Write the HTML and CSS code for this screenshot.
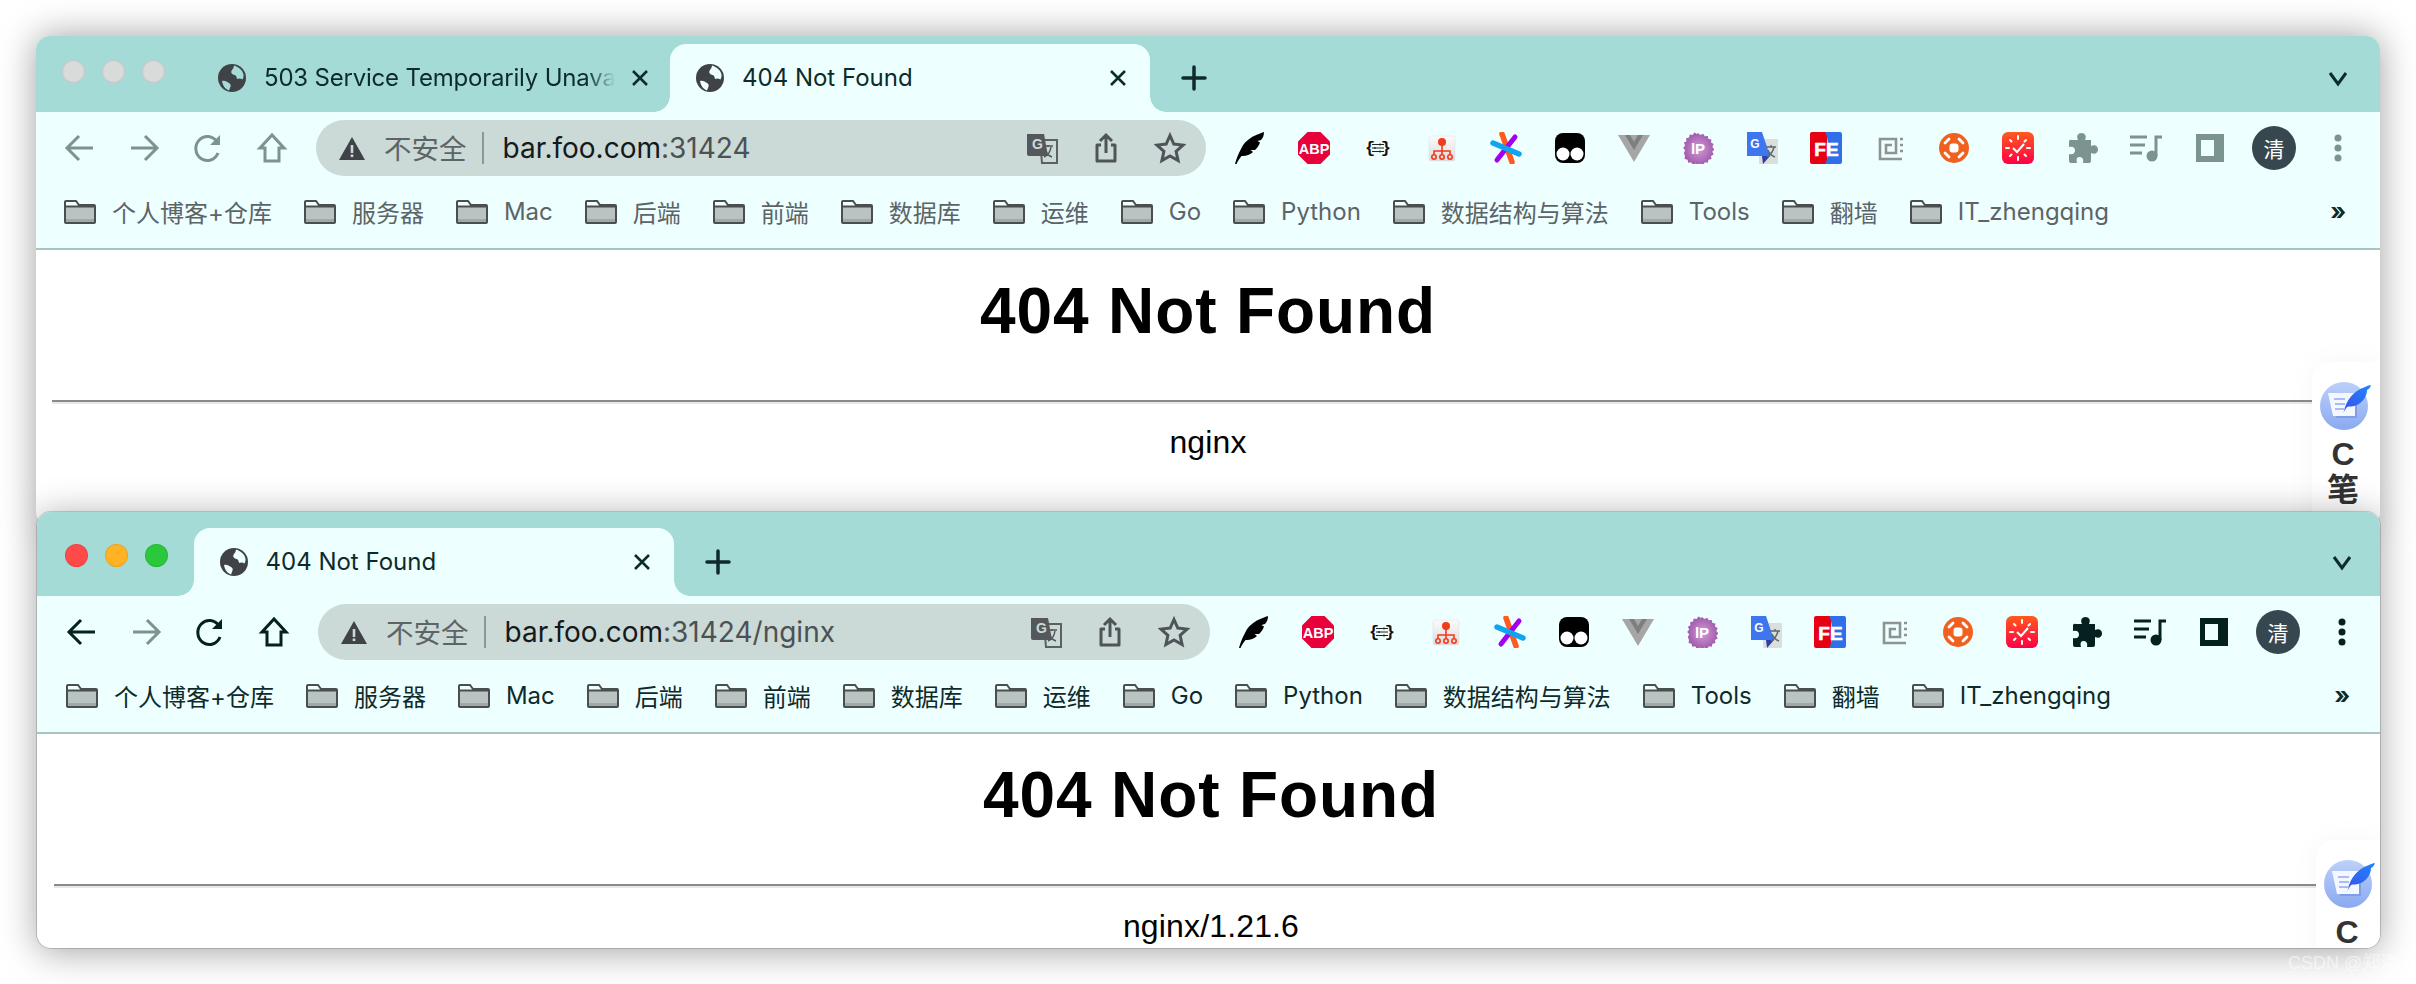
FILE: index.html
```html
<!DOCTYPE html>
<html lang="zh">
<head>
<meta charset="utf-8">
<title>404 Not Found</title>
<link rel="stylesheet" href="styles.css">
</head>
<body>
<svg class="defs" width="0" height="0" aria-hidden="true">
  <defs>
    <linearGradient id="clockG" x1="0" y1="0" x2="0" y2="1"><stop offset="0" stop-color="#ff5a1e"/><stop offset="1" stop-color="#ff0046"/></linearGradient>
    <linearGradient id="orgG" x1="0" y1="0" x2="0" y2="1"><stop offset="0" stop-color="#fbfbfb"/><stop offset="1" stop-color="#dcdcdc"/></linearGradient>
    <linearGradient id="noteG" x1="0" y1="0" x2="0" y2="1"><stop offset="0" stop-color="#bcd0f9"/><stop offset="1" stop-color="#8aa9f0"/></linearGradient>
    <linearGradient id="quillG" x1="1" y1="0" x2="0" y2="1"><stop offset="0" stop-color="#1f86ff"/><stop offset="1" stop-color="#3a4fe8"/></linearGradient>
    <radialGradient id="ipG"><stop offset="0" stop-color="#d39bd8"/><stop offset="1" stop-color="#a05aab"/></radialGradient>
    <symbol id="i-globe" viewBox="0 0 28 28"><circle cx="14" cy="14" r="14" fill="#3f4347"/><path d="M16 1.500c2.500 1 6 2.500 8 5.500 2 3 2 6 .5 8.500-1.500-1-3.500-1.500-5-.5-1.500-1.500-.5-3.500-3-4-2-.5-4-2-3-4 .5-1.500 2-2 2.500-5.500zM4 17c2.500-1 5 .5 7 2 1.500 1 2 2 1.500 3.500l-1.500 4c-3-1-6-4-7-9.500z" fill="var(--tab-cut)"/></symbol>
    <symbol id="i-close" viewBox="0 0 20 20"><path d="M3 3l14 14M17 3L3 17" fill="none" stroke="#0c2b2a" stroke-width="2.600"/></symbol>
    <symbol id="i-plus" viewBox="0 0 32 32"><path d="M16 5v22M5 16h22" fill="none" stroke="#0c2b2a" stroke-width="3.500" stroke-linecap="round"/></symbol>
    <symbol id="i-chev" viewBox="0 0 24 24"><path d="M4 7l8 11 8-11" fill="none" stroke="#0c2b2a" stroke-width="3"/></symbol>
    <symbol id="i-back" viewBox="0 0 32 32"><path d="M29 16H4M15 4L3 16l12 12" fill="none" stroke="currentColor" stroke-width="3"/></symbol>
    <symbol id="i-fwd" viewBox="0 0 32 32"><path d="M3 16h25M17 4l12 12-12 12" fill="none" stroke="currentColor" stroke-width="3"/></symbol>
    <symbol id="i-reload" viewBox="0 0 32 32"><path d="M26 21a11.500 12 0 1 1-1-11" fill="none" stroke="currentColor" stroke-width="3"/><path d="M28 3v10H18z" fill="currentColor"/></symbol>
    <symbol id="i-home" viewBox="0 0 32 32"><path d="M4 16L16 3l12 13h-5v13H9V16z" fill="none" stroke="currentColor" stroke-width="3"/></symbol>
    <symbol id="i-warn" viewBox="0 0 28 28"><path d="M14 3l13 23H1z" fill="#3f4347"/><rect x="12.700" y="11" width="2.600" height="8" fill="#cbd9d7"/><rect x="12.700" y="20.500" width="2.600" height="2.600" fill="#cbd9d7"/></symbol>
    <symbol id="i-gt" viewBox="0 0 32 32"><path d="M14 8h17v23H16z" fill="#cbd9d7" stroke="#5b6063" stroke-width="2"/><path d="M1 2h17l4 22H3a2 2 0 0 1-2-2z" fill="#54585c"/><text x="6" y="17" class="gt-g">G</text><path d="M17 14h10M22 13v2M25 15c-1 6-4 9-7 10M19 17c1 4 4 7 7 8" fill="none" stroke="#54585c" stroke-width="1.500"/></symbol>
    <symbol id="i-share" viewBox="0 0 32 32"><path d="M11 13H7v16h18V13h-4" fill="none" stroke="#4f5458" stroke-width="3" stroke-linejoin="round"/><path d="M16 21V3M10 9l6-6 6 6" fill="none" stroke="#4f5458" stroke-width="3"/></symbol>
    <symbol id="i-star" viewBox="0 0 32 32"><path d="M16 3.500l3.800 8.600 9.300 1-7 6.300 2 9.200-8.100-4.700-8.100 4.700 2-9.200-7-6.300 9.300-1z" fill="none" stroke="#4f5458" stroke-width="3" stroke-linejoin="miter"/></symbol>
    <symbol id="i-feather" viewBox="0 0 32 32"><path d="M1 32C2 28 4 22 7 17 10 10 16 6 20 4 24 2 27 1 30 0 30 3 29 6 27 8L23.500 9 26 10.500C25 14 23 16 21 18L16.500 18 19 20C16 23 11 24.500 7.500 24 5.500 26.500 3.500 29.500 2.500 32Z" fill="#000"/></symbol>
    <symbol id="i-abp" viewBox="0 0 32 32"><path d="M9.500 0h13L32 9.500v13L22.500 32h-13L0 22.500v-13z" fill="#e8003a"/><text x="16" y="21.500" class="abp-t">ABP</text></symbol>
    <symbol id="i-json" viewBox="0 0 32 32"><text x="3" y="21" class="json-t">{</text><text x="29" y="21" class="json-t json-e">}</text><path d="M10 12.500h12M10 16h12M10 19.500h12" stroke="#222" stroke-width="1.100"/><path d="M18 11.500v2M13 15v2M18 18.500v2" stroke="#222" stroke-width="1.300"/></symbol>
    <symbol id="i-org" viewBox="0 0 32 32"><rect x="3" y="4" width="26" height="25" rx="2" fill="url(#orgG)" stroke="#ddd" stroke-width=".5"/><circle cx="16" cy="10" r="4" fill="#f23a1c"/><path d="M16 13v5M8 23v-4h16v4M16 18v5" fill="none" stroke="#f23a1c" stroke-width="1.600"/><g fill="none" stroke="#f23a1c" stroke-width="1.600"><circle cx="8" cy="25" r="2.200"/><circle cx="16" cy="25" r="2.200"/><circle cx="24" cy="25" r="2.200"/></g></symbol>
    <symbol id="i-spark" viewBox="0 0 32 32"><path d="M12 2l10 28" stroke="#ff5a1f" stroke-width="5.500" stroke-linecap="round"/><path d="M25 5L7 28" stroke="#a200f5" stroke-width="5" stroke-linecap="round"/><path d="M3 11l26 11" stroke="#0ea5ee" stroke-width="5.500" stroke-linecap="round"/></symbol>
    <symbol id="i-tamper" viewBox="0 0 32 32"><rect x="1" y="1" width="30" height="30" rx="8" fill="#000"/><circle cx="9" cy="22" r="6.500" fill="#fff"/><circle cx="23" cy="22" r="6.500" fill="#fff"/></symbol>
    <symbol id="i-vue" viewBox="0 0 32 32"><path d="M0 3h32L16 30z" fill="#a6a6a6"/><path d="M7 3h18l-9 15z" fill="#7e7e7e"/><path d="M12 3h8l-4 7z" fill="#a6a6a6"/></symbol>
    <symbol id="i-ip" viewBox="0 0 32 32"><path d="M16 1l2.400 2 2.800-1.300 1.600 2.600 3-.4.600 3 3 .6-.4 3 2.600 1.600-1.300 2.800 2 2.400-2 2.400 1.300 2.800-2.600 1.600.4 3-3 .6-.6 3-3-.4-1.600 2.600-2.800-1.300-2.400 2-2.400-2-2.800 1.300-1.600-2.600-3 .4-.6-3-3-.6.4-3L1.900 21l1.300-2.800-2-2.200 2-2.400L1.900 10.800l2.600-1.600-.4-3 3-.6.6-3 3 .4 1.600-2.600L15 2z" fill="url(#ipG)"/><text x="16" y="22" class="ip-t">lP</text></symbol>
    <symbol id="i-gtc" viewBox="0 0 32 32"><rect x="13" y="7" width="19" height="25" rx="1" fill="#dcdedc"/><path d="M1 0h15l8 24H1z" fill="#3d76ee"/><path d="M16 24h8l-7 8z" fill="#2a3fa8"/><text x="9" y="16" class="gtc-g">G</text><path d="M20 15h10M25 13v2M28 15c-1 5-4 8-7 10M22 18c1 3 4 6 7 7" fill="none" stroke="#5a6a72" stroke-width="1.500"/></symbol>
    <symbol id="i-fe" viewBox="0 0 32 32"><path d="M2 0h15v32H2a2 2 0 0 1-2-2V2a2 2 0 0 1 2-2z" fill="#e60012"/><path d="M15 0h15a2 2 0 0 1 2 2v28a2 2 0 0 1-2 2H15c4-5 4-27 0-32z" fill="#2f6fe8"/><text x="16.500" y="24" class="fe-t">FE</text></symbol>
    <symbol id="i-spiral" viewBox="0 0 32 32"><path d="M28 27H6V7h16v14H12v-8h6" fill="none" stroke="#8f9391" stroke-width="2.600"/><path d="M26 7h3M26 13h3M26 19h3" stroke="#8f9391" stroke-width="2.600"/></symbol>
    <symbol id="i-orange" viewBox="0 0 32 32"><circle cx="16" cy="16" r="15" fill="#f0611f"/><rect x="11.500" y="11.500" width="9" height="9" rx="3" fill="#fff"/><path d="M7 11l4-4M21 7l4 4M7 21l4 4M21 25l4-4" stroke="#fff" stroke-width="2.800" stroke-linecap="round" fill="none"/></symbol>
    <symbol id="i-clock" viewBox="0 0 32 32"><rect width="32" height="32" rx="6" fill="url(#clockG)"/><path d="M16 4v3M16 25v3M4 16h3M25 16h3M8 8l1.500 1.500M24 8l-1.500 1.500M8 24l1.500-1.500M24 24l-1.500-1.500" stroke="#fff" stroke-width="2" stroke-linecap="round"/><path d="M11 16l4 4 7-8" fill="none" stroke="#fff" stroke-width="2"/></symbol>
    <symbol id="i-puzzle" viewBox="0 0 32 32"><path d="M6 8h6c-2-4 0-7 3.500-7S21 4 19 8h6v6c4-2 7 0 7 3.500S29 23 25 21v8a2 2 0 0 1-2 2h-6c1-4-1-6-3.500-6S10 27 11 31H5a2 2 0 0 1-2-2v-7c4 1 6-1 6-3.500S7 14 3 15V10a2 2 0 0 1 3-2z" fill="currentColor"/></symbol>
    <symbol id="i-music" viewBox="0 0 32 32"><path d="M0 5h17M0 13h15M0 21h12" stroke="currentColor" stroke-width="3"/><circle cx="22" cy="24" r="5.500" fill="currentColor"/><path d="M26 24V5h6" fill="none" stroke="currentColor" stroke-width="3"/></symbol>
    <symbol id="i-more" viewBox="0 0 8 32"><circle cx="4" cy="6" r="3.500" fill="currentColor"/><circle cx="4" cy="16" r="3.500" fill="currentColor"/><circle cx="4" cy="26" r="3.500" fill="currentColor"/></symbol>
    <symbol id="i-folder" viewBox="0 0 32 24"><path d="M1 23V2a1 1 0 0 1 1-1h10l3 4h15a1 1 0 0 1 1 1v17z" fill="#eefffe"/><path d="M1 7h30v16H1z" fill="#b9c3c1"/><path d="M1 19h30v4H1z" fill="#9faaa8"/><path d="M2 1h10l3 4h15a1 1 0 0 1 1 1v16a1 1 0 0 1-1 1H2a1 1 0 0 1-1-1V2a1 1 0 0 1 1-1zM1 6.500h30" fill="none" stroke="#4a4e4f" stroke-width="2"/></symbol>
    <symbol id="i-note" viewBox="0 0 52 48"><circle cx="24" cy="24" r="24" fill="url(#noteG)"/><path d="M10 13h26a1 1 0 0 1 1 1v22H16z" fill="#7f9eea"/><path d="M8 11h27v23H13z" fill="#f4f7ff"/><path d="M14 17h11M15 22h10M15 27h9" stroke="#a9bdf2" stroke-width="1.800"/><path d="M24 29c2-10 9-20 21-24 2-1 4-2 6-2-1 3-2 4-4 5 0 6-4 12-10 15-4 2-8 1-10 2l-4 6z" fill="url(#quillG)"/></symbol>
  </defs>
</svg>

<main class="desktop">
  <section class="window window-back">
    <header class="tabstrip">
      <div class="lights"><span class="light off"></span><span class="light off"></span><span class="light off"></span></div>
      <div class="tab tab-idle"><svg class="globe"><use href="#i-globe"/></svg><span class="tab-title">503 Service Temporarily Unavailable</span><svg class="close"><use href="#i-close"/></svg></div>
      <div class="tab tab-on"><svg class="globe"><use href="#i-globe"/></svg><span class="tab-title">404 Not Found</span><svg class="close"><use href="#i-close"/></svg></div>
      <svg class="plus"><use href="#i-plus"/></svg>
      <svg class="chev"><use href="#i-chev"/></svg>
    </header>
    <nav class="toolbar">
      <div class="cell"><svg class="ic"><use href="#i-back"/></svg></div>
      <div class="cell"><svg class="ic"><use href="#i-fwd"/></svg></div>
      <div class="cell"><svg class="ic"><use href="#i-reload"/></svg></div>
      <div class="cell"><svg class="ic"><use href="#i-home"/></svg></div>
      <div class="omnibox">
        <svg class="warn"><use href="#i-warn"/></svg><span class="insecure">不安全</span><span class="omni-sep"></span><span class="url"><b class="host">bar.foo.com</b>:31424</span>
        <div class="omni-right"><div class="cell"><svg class="ic"><use href="#i-gt"/></svg></div><div class="cell"><svg class="ic"><use href="#i-share"/></svg></div><div class="cell"><svg class="ic"><use href="#i-star"/></svg></div></div>
      </div>
      <div class="ext">
        <div class="cell"><svg class="ic"><use href="#i-feather"/></svg></div>
        <div class="cell"><svg class="ic"><use href="#i-abp"/></svg></div>
        <div class="cell"><svg class="ic"><use href="#i-json"/></svg></div>
        <div class="cell"><svg class="ic"><use href="#i-org"/></svg></div>
        <div class="cell"><svg class="ic"><use href="#i-spark"/></svg></div>
        <div class="cell"><svg class="ic"><use href="#i-tamper"/></svg></div>
        <div class="cell"><svg class="ic"><use href="#i-vue"/></svg></div>
        <div class="cell"><svg class="ic"><use href="#i-ip"/></svg></div>
        <div class="cell"><svg class="ic"><use href="#i-gtc"/></svg></div>
        <div class="cell"><svg class="ic"><use href="#i-fe"/></svg></div>
        <div class="cell"><svg class="ic"><use href="#i-spiral"/></svg></div>
        <div class="cell"><svg class="ic"><use href="#i-orange"/></svg></div>
        <div class="cell"><svg class="ic"><use href="#i-clock"/></svg></div>
        <div class="cell"><svg class="ic"><use href="#i-puzzle"/></svg></div>
        <div class="cell"><svg class="ic"><use href="#i-music"/></svg></div>
        <div class="cell"><span class="panel"></span></div>
        <div class="cell"><span class="avatar">清</span></div>
        <div class="cell"><svg class="more"><use href="#i-more"/></svg></div>
      </div>
    </nav>
    <div class="bookmarks">
      <a class="bm"><svg class="folder"><use href="#i-folder"/></svg>个人博客+仓库</a>
      <a class="bm"><svg class="folder"><use href="#i-folder"/></svg>服务器</a>
      <a class="bm"><svg class="folder"><use href="#i-folder"/></svg>Mac</a>
      <a class="bm"><svg class="folder"><use href="#i-folder"/></svg>后端</a>
      <a class="bm"><svg class="folder"><use href="#i-folder"/></svg>前端</a>
      <a class="bm"><svg class="folder"><use href="#i-folder"/></svg>数据库</a>
      <a class="bm"><svg class="folder"><use href="#i-folder"/></svg>运维</a>
      <a class="bm"><svg class="folder"><use href="#i-folder"/></svg>Go</a>
      <a class="bm"><svg class="folder"><use href="#i-folder"/></svg>Python</a>
      <a class="bm"><svg class="folder"><use href="#i-folder"/></svg>数据结构与算法</a>
      <a class="bm"><svg class="folder"><use href="#i-folder"/></svg>Tools</a>
      <a class="bm"><svg class="folder"><use href="#i-folder"/></svg>翻墙</a>
      <a class="bm"><svg class="folder"><use href="#i-folder"/></svg>IT_zhengqing</a>
      <span class="bm-more">»</span>
    </div>
    <div class="page">
      <h1>404 Not Found</h1>
      <hr>
      <p>nginx</p>
      <aside class="widget"><svg class="note"><use href="#i-note"/></svg><span class="widget-t">C</span><span class="widget-t">笔</span></aside>
    </div>
  </section>

  <section class="window window-front">
    <header class="tabstrip">
      <div class="lights"><span class="light red"></span><span class="light amber"></span><span class="light green"></span></div>
      <div class="tab tab-on"><svg class="globe"><use href="#i-globe"/></svg><span class="tab-title">404 Not Found</span><svg class="close"><use href="#i-close"/></svg></div>
      <svg class="plus"><use href="#i-plus"/></svg>
      <svg class="chev"><use href="#i-chev"/></svg>
    </header>
    <nav class="toolbar">
      <div class="cell"><svg class="ic"><use href="#i-back"/></svg></div>
      <div class="cell cell-dim"><svg class="ic"><use href="#i-fwd"/></svg></div>
      <div class="cell"><svg class="ic"><use href="#i-reload"/></svg></div>
      <div class="cell"><svg class="ic"><use href="#i-home"/></svg></div>
      <div class="omnibox">
        <svg class="warn"><use href="#i-warn"/></svg><span class="insecure">不安全</span><span class="omni-sep"></span><span class="url"><b class="host">bar.foo.com</b>:31424/nginx</span>
        <div class="omni-right"><div class="cell"><svg class="ic"><use href="#i-gt"/></svg></div><div class="cell"><svg class="ic"><use href="#i-share"/></svg></div><div class="cell"><svg class="ic"><use href="#i-star"/></svg></div></div>
      </div>
      <div class="ext">
        <div class="cell"><svg class="ic"><use href="#i-feather"/></svg></div>
        <div class="cell"><svg class="ic"><use href="#i-abp"/></svg></div>
        <div class="cell"><svg class="ic"><use href="#i-json"/></svg></div>
        <div class="cell"><svg class="ic"><use href="#i-org"/></svg></div>
        <div class="cell"><svg class="ic"><use href="#i-spark"/></svg></div>
        <div class="cell"><svg class="ic"><use href="#i-tamper"/></svg></div>
        <div class="cell"><svg class="ic"><use href="#i-vue"/></svg></div>
        <div class="cell"><svg class="ic"><use href="#i-ip"/></svg></div>
        <div class="cell"><svg class="ic"><use href="#i-gtc"/></svg></div>
        <div class="cell"><svg class="ic"><use href="#i-fe"/></svg></div>
        <div class="cell"><svg class="ic"><use href="#i-spiral"/></svg></div>
        <div class="cell"><svg class="ic"><use href="#i-orange"/></svg></div>
        <div class="cell"><svg class="ic"><use href="#i-clock"/></svg></div>
        <div class="cell"><svg class="ic"><use href="#i-puzzle"/></svg></div>
        <div class="cell"><svg class="ic"><use href="#i-music"/></svg></div>
        <div class="cell"><span class="panel"></span></div>
        <div class="cell"><span class="avatar">清</span></div>
        <div class="cell"><svg class="more"><use href="#i-more"/></svg></div>
      </div>
    </nav>
    <div class="bookmarks">
      <a class="bm"><svg class="folder"><use href="#i-folder"/></svg>个人博客+仓库</a>
      <a class="bm"><svg class="folder"><use href="#i-folder"/></svg>服务器</a>
      <a class="bm"><svg class="folder"><use href="#i-folder"/></svg>Mac</a>
      <a class="bm"><svg class="folder"><use href="#i-folder"/></svg>后端</a>
      <a class="bm"><svg class="folder"><use href="#i-folder"/></svg>前端</a>
      <a class="bm"><svg class="folder"><use href="#i-folder"/></svg>数据库</a>
      <a class="bm"><svg class="folder"><use href="#i-folder"/></svg>运维</a>
      <a class="bm"><svg class="folder"><use href="#i-folder"/></svg>Go</a>
      <a class="bm"><svg class="folder"><use href="#i-folder"/></svg>Python</a>
      <a class="bm"><svg class="folder"><use href="#i-folder"/></svg>数据结构与算法</a>
      <a class="bm"><svg class="folder"><use href="#i-folder"/></svg>Tools</a>
      <a class="bm"><svg class="folder"><use href="#i-folder"/></svg>翻墙</a>
      <a class="bm"><svg class="folder"><use href="#i-folder"/></svg>IT_zhengqing</a>
      <span class="bm-more">»</span>
    </div>
    <div class="page">
      <h1>404 Not Found</h1>
      <hr>
      <p>nginx/1.21.6</p>
      <aside class="widget"><svg class="note"><use href="#i-note"/></svg><span class="widget-t">C</span></aside>
    </div>
  </section>

  <span class="watermark">CSDN @郑清</span>
</main>
</body>
</html>
```
FILE: styles.css
```css
* { box-sizing: border-box; }
html, body { margin: 0; padding: 0; }
body {
  width: 2416px;
  height: 984px;
  overflow: hidden;
  background: #fff;
  font-family: Inter, "Noto Sans CJK SC", sans-serif;
}
.defs { position: absolute; }
.desktop { position: relative; width: 2416px; height: 984px; overflow: hidden; }

/* windows on a desktop */
.window {
  --bar: #edffff;
  --ink: #7c9490;
  --bm-ink: #5c6467;
  --tab-cut: #a5dbd7;
  position: absolute;
  right: 36px;
  display: flex;
  flex-direction: column;
  overflow: hidden;
  background: #fff;
  border-radius: 14px;
}
.window-back {
  left: 36px;
  top: 36px;
  height: 490px;
  box-shadow: 0 0 36px rgba(0, 0, 0, .38);
}
.window-front {
  --ink: #04201f;
  --bm-ink: #0f2a2a;
  left: 37px;
  top: 512px;
  height: 436px;
  box-shadow: 0 4px 36px rgba(0, 0, 0, .36), 0 0 0 1px rgba(0, 0, 0, .16);
}

/* tab strip */
.tabstrip {
  display: flex;
  align-items: flex-end;
  flex: none;
  height: 76px;
  background: #a5dbd7;
}
.window-front .tabstrip { height: 84px; }
.lights {
  display: flex;
  flex: none;
  gap: 17px;
  width: 154px;
  padding: 0 0 29px 26px;
}
.window-front .lights { width: 156.500px; padding-left: 28px; }
.light {
  width: 23px;
  height: 23px;
  border-radius: 50%;
  border: 1px solid rgba(0, 0, 0, .08);
}
.off { background: #d9dada; }
.red { background: #ff4a4a; }
.amber { background: #ffb224; }
.green { background: #2ac83a; }

.tab {
  position: relative;
  display: flex;
  align-items: center;
  flex: none;
  width: 480px;
  height: 68px;
  padding: 0 22px 0 26px;
  border-radius: 16px 16px 0 0;
  font-size: 24px;
  color: #0c2b2a;
}
.tab-idle { padding: 0 20px 0 28px; letter-spacing: -.2px; }
.tab-on { --tab-cut: #edffff; background: #edffff; }
.tab-on::before,
.tab-on::after {
  content: "";
  position: absolute;
  bottom: 0;
  width: 16px;
  height: 16px;
}
.tab-on::before { left: -16px; background: radial-gradient(circle at 0 0, transparent 15.500px, #edffff 16px); }
.tab-on::after { right: -16px; background: radial-gradient(circle at 100% 0, transparent 15.500px, #edffff 16px); }
.globe { flex: none; width: 28px; height: 28px; margin-right: 18px; }
.tab-idle .globe { margin-right: 18px; }
.tab-title {
  flex: 1;
  min-width: 0;
  overflow: hidden;
  white-space: nowrap;
  line-height: 34px;
}
.tab-idle .tab-title { -webkit-mask-image: linear-gradient(to right, #000 88%, transparent 96%); mask-image: linear-gradient(to right, #000 88%, transparent 96%); }
.close { flex: none; width: 20px; height: 20px; }
.plus { flex: none; width: 32px; height: 32px; margin: 0 0 18px 28px; }
.chev { flex: none; width: 24px; height: 24px; margin: 0 30px 22px auto; }
.window-front .chev { margin-right: 26px; }

/* toolbar */
.toolbar {
  display: flex;
  flex: none;
  align-items: center;
  height: 72px;
  padding: 8px 10px 8px 12px;
  background: var(--bar);
  color: var(--ink);
}
.window-front .toolbar { padding-left: 13px; padding-right: 6px; }
.cell {
  display: flex;
  flex: none;
  align-items: center;
  justify-content: center;
  width: 64px;
  height: 56px;
}
.cell-dim { color: #7c9490; }
.ic { width: 32px; height: 32px; }
.omnibox {
  display: flex;
  flex: 1;
  align-items: center;
  min-width: 0;
  height: 56px;
  margin: 0 12px;
  padding-left: 22px;
  border-radius: 28px;
  background: #cbd9d7;
}
.warn { flex: none; width: 28px; height: 28px; margin-right: 18px; }
.insecure { margin-bottom: 2px; font-size: 27.500px; color: #5d6467; }
.omni-sep { flex: none; width: 2px; height: 32px; margin: 0 19px 0 15px; background: #8b9799; }
.url { font-size: 28px; color: #4c5154; white-space: nowrap; }
.host { font-weight: 400; color: #14191b; }
.omni-right { display: flex; margin-left: auto; padding-right: 4px; }
.ext { display: flex; flex: none; }
.panel { width: 28px; height: 28px; border: solid currentColor; border-width: 6px 10px 6px 5px; }
.avatar {
  display: flex;
  align-items: center;
  justify-content: center;
  width: 44px;
  height: 44px;
  border-radius: 50%;
  background: #37474f;
  color: #fff;
  font-size: 21px;
}
.more { width: 8px; height: 32px; }

/* svg label text */
.gt-g { font: 700 14px "Liberation Sans", sans-serif; fill: #cbd9d7; }
.abp-t { font: 700 14.500px "Liberation Sans", sans-serif; fill: #fff; text-anchor: middle; }
.json-t { font: 700 17px "Liberation Mono", monospace; fill: #111; }
.json-e { text-anchor: end; }
.ip-t { font: 700 15px "Liberation Sans", sans-serif; fill: #fff; text-anchor: middle; }
.gtc-g { font: 700 12px "Liberation Sans", sans-serif; fill: #fff; text-anchor: middle; }
.fe-t { font: 900 19px "Liberation Sans", sans-serif; fill: #fff; text-anchor: middle; stroke: #fff; stroke-width: .6px; }

/* bookmarks */
.bookmarks {
  display: flex;
  flex: none;
  align-items: center;
  height: 66px;
  padding: 0 34px 9px 12px;
  border-bottom: 2px solid #a9c5c0;
  background: var(--bar);
  color: var(--bm-ink);
  font-size: 24px;
}
.window-front .bookmarks { padding-left: 13px; padding-right: 30px; }
.bm { display: flex; flex: none; align-items: center; gap: 16px; padding: 0 16px; white-space: nowrap; }
.folder { flex: none; width: 32px; height: 24px; }
.bm-more { margin-left: auto; font-size: 24px; font-weight: 700; color: #0c2b2a; line-height: 1; }

/* page */
.page { position: relative; flex: 1; padding: 0 16px; color: #000; text-align: center; font-family: "Liberation Sans", sans-serif; }
.window-front .page { padding: 0 12px 0 17px; }
.page h1 { margin: 24px 0 52px; font-size: 64px; line-height: 74px; font-weight: 700; letter-spacing: .9px; }
.page hr { margin: 0; height: 4px; border: 0; border-top: 2px solid #8b8b8b; border-bottom: 2px solid #e8e8e8; }
.page p { margin: 20px 0 0; font-size: 32px; line-height: 37px; letter-spacing: .15px; }

.widget {
  position: absolute;
  right: 0;
  top: 112px;
  display: flex;
  flex-direction: column;
  align-items: center;
  width: 68px;
  height: 200px;
  padding: 20px 6px 0 0;
  border-radius: 18px 0 0 18px;
  background: #fff;
  box-shadow: 0 0 30px rgba(0, 0, 0, .04);
  color: #333;
}
.window-front .widget { top: 106px; width: 64px; padding-right: 2px; }
.note { flex: none; width: 52px; height: 48px; margin: 0 0 6px 6px; }
.widget-t { font: 700 32px/36px "Liberation Sans", "Noto Sans CJK SC", sans-serif; }

.watermark {
  position: absolute;
  left: 2288px;
  top: 952px;
  font: 18px/22px "Liberation Sans", "Noto Sans CJK SC", sans-serif;
  color: rgba(255, 255, 255, .55);
}
```
